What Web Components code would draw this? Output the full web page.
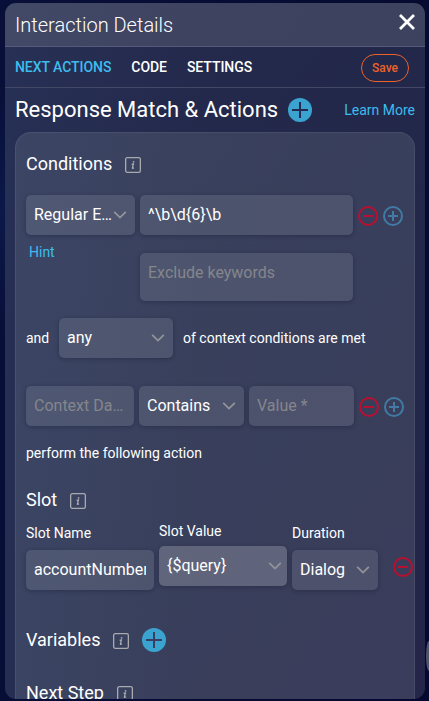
<!DOCTYPE html>
<html lang="en">
<head>
<meta charset="utf-8">
<title>Interaction Details</title>
<style>
html,body{margin:0;height:100%;overflow:hidden}
body{font-family:Roboto,"Liberation Sans",sans-serif;color:#fff;background:radial-gradient(circle at 0 30%,#0b1848 0,rgba(11,24,72,0) 130px),linear-gradient(100deg,#080f38,#05092f)}
</style>
</head>
<body>
<interaction-dialog></interaction-dialog>
<script>
const define = (name, html) => {
  const template = document.createElement('template');
  template.innerHTML = html;
  customElements.define(name, class extends HTMLElement {
    constructor() {
      super();
      this.attachShadow({mode: 'open'}).append(template.content.cloneNode(true));
    }
  });
};

define('info-icon', `
<style>:host{display:block;width:16px;height:16px}svg{display:block}</style>
<svg width="16" height="16" viewBox="0 0 16 16" fill="none"><rect x=".65" y=".65" width="14.7" height="14.7" rx="1.6" stroke="#a9aaae" stroke-width="1.3"/><circle cx="8.6" cy="4.8" r=".9" fill="#a9aaae"/><path d="M6.6 7.3 8.4 6.9 7.4 11.1Q7.3 11.9 9 10.8" stroke="#a9aaae" stroke-width="1.3"/></svg>`);

define('add-badge', `
<style>:host{display:block;width:24px;height:24px}svg{display:block}</style>
<svg width="24" height="24" viewBox="0 0 24 24"><circle cx="12" cy="12" r="12" fill="#3ba3d0"/><path d="M12 4v16M4 12h16" stroke="var(--cross,#252a50)" stroke-width="2"/></svg>`);

define('round-action', `
<style>:host{display:block;flex:none;width:20px;height:20px;color:#417ba5}:host([kind=remove]){color:#b90f30}:host([kind=remove]) .v{display:none}svg{display:block}</style>
<svg width="20" height="20" viewBox="0 0 20 20" fill="none" stroke="currentColor" stroke-width="2"><circle cx="10" cy="10" r="9"/><path d="M5 10h10"/><path class="v" d="M10 5v10"/></svg>`);

define('form-field', `
<style>
:host{display:flex;box-sizing:border-box;flex:none;height:40px;padding:0 8px;border-radius:5px;background:rgba(255,255,255,.105);box-shadow:0 1px 4px rgba(10,12,40,.3);font-size:16px;line-height:40px;white-space:nowrap}
:host([muted]){color:#85868c}
:host([lit]){background:rgba(255,255,255,.2);padding-right:5px}
span{flex:1;min-width:0;overflow:hidden}
svg{display:none;flex:none;width:14px;height:10px;align-self:center}
:host([select]) svg{display:block}
</style>
<span><slot></slot></span><svg viewBox="0 0 14 10" fill="none" stroke="#93949a" stroke-width="1.8"><path d="M1.2 1.8 7 7.6 12.8 1.8"/></svg>`);

define('section-title', `
<style>:host{display:flex;height:24px;align-items:center;font-size:18px;line-height:24px;white-space:nowrap}info-icon{margin-left:13px;margin-top:2px}::slotted(add-badge){margin-left:13px}</style>
<slot></slot><info-icon></info-icon><slot name="action"></slot>`);

define('condition-panel', `
<style>
:host{display:block;box-sizing:border-box;height:568px;overflow:hidden;margin:0 10px;padding:19px 0 0 10px;border:1px solid rgba(255,255,255,.07);border-bottom:0;border-radius:16px 16px 0 0;background:rgba(240,255,235,.11);font-size:14px;--cross:#3b3e60}
.row{display:flex;gap:5px;align-items:flex-start}
.sub{height:20px;line-height:20px;white-space:nowrap}
.actions{display:flex;gap:5px}
</style>
<section-title>Conditions</section-title>
<div class="row" style="margin-top:19px"><form-field select style="width:109px">Regular E…</form-field><form-field style="width:213px">^\\b\\d{6}\\b</form-field><div class="actions" style="margin-top:11px"><round-action kind="remove"></round-action><round-action></round-action></div></div>
<div class="row" style="margin-top:7px;height:59px"><div class="sub" style="width:106px;padding-left:3px;color:#3dbced">Hint</div><form-field muted style="width:213px;height:48px;margin-top:11px">Exclude keywords</form-field></div>
<div class="row" style="margin-top:17px;align-items:center;gap:10px"><div class="sub" style="width:23px">and</div><form-field select style="width:114px">any</form-field><div class="sub">of context conditions are met</div></div>
<div class="row" style="margin-top:28px"><form-field muted style="width:108px">Context Da…</form-field><form-field select style="width:105px">Contains</form-field><form-field muted style="width:105px">Value *</form-field><div class="actions" style="margin-top:11px"><round-action kind="remove"></round-action><round-action></round-action></div></div>
<div class="sub" style="margin-top:17px">perform the following action</div>
<section-title style="margin-top:25px">Slot</section-title>
<div class="row" style="margin-top:9px">
<div style="margin-top:2px"><div class="sub">Slot Name</div><form-field style="width:128px;margin-top:7px">accountNumber</form-field></div>
<div><div class="sub">Slot Value</div><form-field select lit style="width:128px;margin-top:5px">{$query}</form-field></div>
<div style="margin-top:2px"><div class="sub">Duration</div><form-field select style="width:86px;margin-top:7px">Dialog</form-field></div>
<round-action kind="remove" style="margin:36px 0 0 10px"></round-action></div>
<section-title style="margin-top:38px">Variables<add-badge slot="action"></add-badge></section-title>
<section-title style="margin-top:29px">Next Step</section-title>`);

define('nav-tabs', `
<style>:host{display:flex;box-sizing:border-box;height:41px;align-items:center;padding:0 16px 0 10px;gap:20px;border-bottom:1px solid #434866;font-size:14px;font-weight:500;letter-spacing:-.06px;white-space:nowrap}
.on{color:#3dbced}button{margin:1px 0 0 auto;box-sizing:border-box;width:48px;height:28px;padding:0;border:1px solid #ed6228;border-radius:14px;background:none;color:#ed6228;font:500 12px Roboto,sans-serif;letter-spacing:0}</style>
<span class="on">NEXT ACTIONS</span><span>CODE</span><span>SETTINGS</span><button>Save</button>`);

define('interaction-dialog', `
<style>
:host{display:block;padding:3px 4px 0 5px}
main{height:696px;overflow:hidden;border-radius:11px;background:linear-gradient(90deg,rgba(43,58,98,.35),rgba(36,43,78,.1) 45%),linear-gradient(125deg,#252b4e,#222749 60%,#242548)}
header{display:flex;box-sizing:border-box;height:44px;align-items:center;justify-content:space-between;padding:0 10px;border-bottom:1px solid #56597a;background:rgba(255,255,240,.12);font-size:20px;font-weight:300}
.title{display:flex;height:44px;align-items:center;padding:0 10px;font-size:22px;white-space:nowrap}
.title span{margin-bottom:2px}
.title add-badge{margin-left:10px}.title a{margin-left:auto;color:#3dbced;font-size:14px}
.edge{position:absolute;right:0;top:641px;width:3px;height:30px;border-radius:3px 0 0 3px/15px 0 0 15px;background:#50536b}
</style>
<main><header><span>Interaction Details</span><svg width="18" height="18" viewBox="0 0 18 18" style="margin:-6px -1px 0 0"><path d="m2 2 14 14M16 2 2 16" stroke="#fff" stroke-width="2.8"/></svg></header>
<nav-tabs></nav-tabs>
<div class="title"><span>Response Match &amp; Actions</span><add-badge></add-badge><a>Learn More</a></div>
<condition-panel></condition-panel></main><div class="edge"></div>`);
</script>
</body>
</html>
